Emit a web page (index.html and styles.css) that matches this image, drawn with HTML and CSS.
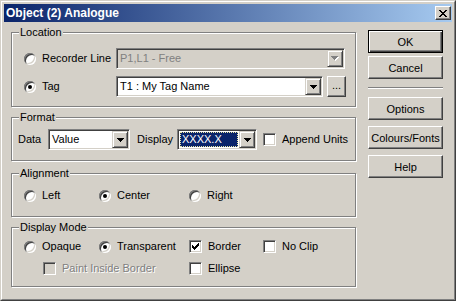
FILE: index.html
```html
<!DOCTYPE html>
<html lang="en">
<head>
    <meta charset="UTF-8">
    <title>Object (2) Analogue</title>
    <link rel="stylesheet" href="styles.css">
</head>
<body>
    <div class="window">
        <div class="frame">
            <div class="titlebar">
                <span class="title">Object (2) Analogue</span>
                <span class="close-btn">
                    <svg width="8" height="7" viewBox="0 0 8 7" shape-rendering="crispEdges"><path d="M0 0h2v1H0z M6 0h2v1H6z M1 1h2v1H1z M5 1h2v1H5z M2 2h4v1H2z M3 3h2v1H3z M2 4h4v1H2z M1 5h2v1H1z M5 5h2v1H5z M0 6h2v1H0z M6 6h2v1H6z" fill="#000"/></svg>
                </span>
            </div>

            <div class="client">
                <div class="main">
                    <!-- Location -->
                    <div class="group group-location">
                        <div class="group-title">Location</div>
                        <div class="row row-recorder">
                            <div class="opt opt-loc"><span class="radio"></span>Recorder Line</div>
                            <div class="combo combo-disabled combo-recorder">
                                <span class="combo-text">P1,L1 - Free</span>
                                <span class="combo-btn">
                                    <svg width="8" height="5" viewBox="0 0 8 5" shape-rendering="crispEdges"><path d="M1 1h7v1H1z M2 2h5v1H2z M3 3h3v1H3z M4 4h1v1H4z" fill="#fff"/><path d="M0 0h7v1H0z M1 1h5v1H1z M2 2h3v1H2z M3 3h1v1H3z" fill="#808080"/></svg>
                                </span>
                            </div>
                        </div>
                        <div class="row row-tag">
                            <div class="opt opt-loc"><span class="radio checked"></span>Tag</div>
                            <div class="combo combo-tag">
                                <span class="combo-text">T1 : My Tag Name</span>
                                <span class="combo-btn">
                                    <svg width="7" height="4" viewBox="0 0 7 4" shape-rendering="crispEdges"><path d="M0 0h7v1H0z M1 1h5v1H1z M2 2h3v1H2z M3 3h1v1H3z" fill="#000"/></svg>
                                </span>
                            </div>
                            <div class="btn btn-browse">...</div>
                        </div>
                    </div>

                    <!-- Format -->
                    <div class="group group-format">
                        <div class="group-title">Format</div>
                        <div class="row row-format">
                            <span class="field-label label-data">Data</span>
                            <div class="combo combo-data">
                                <span class="combo-text">Value</span>
                                <span class="combo-btn">
                                    <svg width="7" height="4" viewBox="0 0 7 4" shape-rendering="crispEdges"><path d="M0 0h7v1H0z M1 1h5v1H1z M2 2h3v1H2z M3 3h1v1H3z" fill="#000"/></svg>
                                </span>
                            </div>
                            <span class="field-label label-display">Display</span>
                            <div class="combo combo-display">
                                <span class="combo-sel">XXXX.X</span>
                                <span class="combo-btn">
                                    <svg width="7" height="4" viewBox="0 0 7 4" shape-rendering="crispEdges"><path d="M0 0h7v1H0z M1 1h5v1H1z M2 2h3v1H2z M3 3h1v1H3z" fill="#000"/></svg>
                                </span>
                            </div>
                            <div class="opt opt-append"><span class="check"></span>Append Units</div>
                        </div>
                    </div>

                    <!-- Alignment -->
                    <div class="group group-align">
                        <div class="group-title">Alignment</div>
                        <div class="row row-align">
                            <div class="opt opt-col1"><span class="radio"></span>Left</div>
                            <div class="opt opt-col2"><span class="radio checked"></span>Center</div>
                            <div class="opt"><span class="radio"></span>Right</div>
                        </div>
                    </div>

                    <!-- Display Mode -->
                    <div class="group group-mode">
                        <div class="group-title">Display Mode</div>
                        <div class="row row-mode1">
                            <div class="opt opt-col1"><span class="radio"></span>Opaque</div>
                            <div class="opt opt-col2"><span class="radio checked"></span>Transparent</div>
                            <div class="opt opt-col3">
                                <span class="check">
                                    <svg width="7" height="7" viewBox="0 0 7 7" shape-rendering="crispEdges"><path d="M0 2h1v3H0z M1 3h1v3H1z M2 4h1v3H2z M3 3h1v3H3z M4 2h1v3H4z M5 1h1v3H5z M6 0h1v3H6z" fill="#000"/></svg>
                                </span>Border
                            </div>
                            <div class="opt"><span class="check"></span>No Clip</div>
                        </div>
                        <div class="row row-mode2">
                            <div class="opt opt-paint disabled"><span class="check check-disabled"></span>Paint Inside Border</div>
                            <div class="opt"><span class="check"></span>Ellipse</div>
                        </div>
                    </div>
                </div>

                <div class="buttons">
                    <div class="btn btn-default">OK</div>
                    <div class="btn btn-cancel">Cancel</div>
                    <div class="separator"></div>
                    <div class="btn btn-options">Options</div>
                    <div class="btn btn-next">Colours/Fonts</div>
                    <div class="btn btn-next">Help</div>
                </div>
            </div>
        </div>
    </div>
</body>
</html>
```

FILE: styles.css
```css
body {
    margin: 0;
    background-color: #d4d0c8;
    font-family: "Liberation Sans", Arial, sans-serif;
    font-size: 11px;
    color: #000;
}

.window {
    width: 456px;
    height: 301px;
    box-sizing: border-box;
    border: 1px solid;
    border-color: #d4d0c8 #404040 #404040 #d4d0c8;
    background-color: #d4d0c8;
}

.frame {
    height: 100%;
    box-sizing: border-box;
    border: 1px solid;
    border-color: #fff #808080 #808080 #fff;
    padding: 2px;
    display: flex;
    flex-direction: column;
}

.titlebar {
    height: 18px;
    flex: none;
    display: flex;
    align-items: center;
    padding-left: 2px;
    background: linear-gradient(to right, #0a246a, #a6caf0);
    color: #fff;
}

.title {
    flex: 1;
    font-weight: bold;
    font-size: 12px;
    white-space: nowrap;
}

.close-btn {
    width: 16px;
    height: 14px;
    box-sizing: border-box;
    margin-right: 1px;
    border: 1px solid;
    border-color: #fff #404040 #404040 #fff;
    box-shadow: inset -1px -1px #808080;
    background-color: #d4d0c8;
    display: flex;
    align-items: center;
    justify-content: center;
}

.client {
    flex: 1;
    display: flex;
    gap: 12px;
    padding: 0 9px 0 7px;
}

.main {
    width: 345px;
    flex: none;
    padding-top: 10px;
}

/* etched group boxes */
.group {
    box-sizing: border-box;
    border: 1px solid #808080;
    box-shadow: inset 1px 1px #fff, 1px 1px #fff;
}

.group-title {
    width: fit-content;
    margin: -7px 0 -6px 7px;
    padding: 0 1px;
    line-height: 13px;
    background-color: #d4d0c8;
}

.group-location { height: 75px; }
.group-format { height: 44px; margin-top: 10px; }
.group-align { height: 44px; margin-top: 12px; }
.group-mode { height: 60px; margin-top: 10px; }

.row {
    display: flex;
    align-items: center;
    margin-left: 12px;
    line-height: 13px;
}

.row-recorder { margin-top: 15px; }
.row-tag { margin-top: 7px; }
.row-format { margin-top: 11px; margin-left: 6px; }
.row-align { margin-top: 15px; }
.row-mode1 { margin-top: 12px; }
.row-mode2 { margin-top: 9px; margin-left: 31px; }

.opt {
    display: flex;
    align-items: center;
    flex: none;
    white-space: nowrap;
}

.opt-loc { width: 92px; }
.opt-col1 { width: 75px; }
.opt-col2 { width: 90px; }
.opt-col3 { width: 74px; }
.opt-paint { width: 146px; }
.opt-append { margin-left: 6px; }

.disabled {
    color: #808080;
    text-shadow: 1px 1px #fff;
}

.radio {
    width: 12px;
    height: 12px;
    flex: none;
    margin-right: 6px;
    border-radius: 50%;
    background-color: #fff;
    box-shadow: inset 1px 1px #808080, inset -1px -1px #fff, inset 2px 2px #404040, inset -2px -2px #d4d0c8;
    display: flex;
    align-items: center;
    justify-content: center;
}

.radio.checked::after {
    content: "";
    width: 4px;
    height: 4px;
    border-radius: 50%;
    background-color: #000;
}

.check {
    width: 13px;
    height: 13px;
    flex: none;
    box-sizing: border-box;
    margin-right: 6px;
    border: 1px solid;
    border-color: #808080 #fff #fff #808080;
    box-shadow: inset 1px 1px #404040, inset -1px -1px #d4d0c8;
    background-color: #fff;
    display: flex;
    align-items: center;
    justify-content: center;
}

.check-disabled { background-color: #d4d0c8; }

/* combo boxes */
.combo {
    display: flex;
    height: 21px;
    flex: none;
    box-sizing: border-box;
    padding: 1px;
    border: 1px solid;
    border-color: #808080 #fff #fff #808080;
    box-shadow: inset 1px 1px #404040, inset -1px -1px #d4d0c8;
    background-color: #fff;
}

.combo-disabled {
    background-color: #d4d0c8;
    color: #808080;
}

.combo-text {
    flex: 1;
    padding-left: 2px;
    line-height: 17px;
    white-space: nowrap;
    overflow: hidden;
}

.combo-sel {
    flex: 1;
    margin: 1px;
    padding-left: 2px;
    line-height: 15px;
    background-color: #0a246a;
    color: #fff;
    outline: 1px dotted #e8e4a0;
    outline-offset: -1px;
}

.combo-btn {
    width: 16px;
    height: 17px;
    flex: none;
    box-sizing: border-box;
    border: 1px solid;
    border-color: #d4d0c8 #404040 #404040 #d4d0c8;
    box-shadow: inset 1px 1px #fff, inset -1px -1px #808080;
    background-color: #d4d0c8;
    display: flex;
    align-items: center;
    justify-content: center;
}

.combo-recorder { width: 229px; }
.combo-tag { width: 207px; }
.combo-data { width: 82px; }
.combo-display { width: 80px; }

.field-label { flex: none; }
.label-data { width: 30px; }
.label-display { width: 40px; margin-left: 7px; }

/* push buttons */
.btn {
    width: 75px;
    height: 23px;
    flex: none;
    box-sizing: border-box;
    border: 1px solid;
    border-color: #fff #404040 #404040 #fff;
    box-shadow: inset -1px -1px #808080;
    display: flex;
    align-items: center;
    justify-content: center;
}

.btn-default {
    border-color: #000;
    box-shadow: inset 1px 1px #fff, inset -1px -1px #404040, inset -2px -2px #808080;
}

.btn-browse {
    width: 19px;
    height: 21px;
    margin-left: 4px;
    align-items: flex-end;
    padding-bottom: 4px;
}

.buttons {
    width: 75px;
    flex: none;
    padding-top: 8px;
    display: flex;
    flex-direction: column;
}

.btn-cancel { margin-top: 3px; }
.btn-next { margin-top: 6px; }

.separator {
    height: 0;
    margin: 8px 0;
    border-top: 1px solid #808080;
    border-bottom: 1px solid #fff;
}
```
